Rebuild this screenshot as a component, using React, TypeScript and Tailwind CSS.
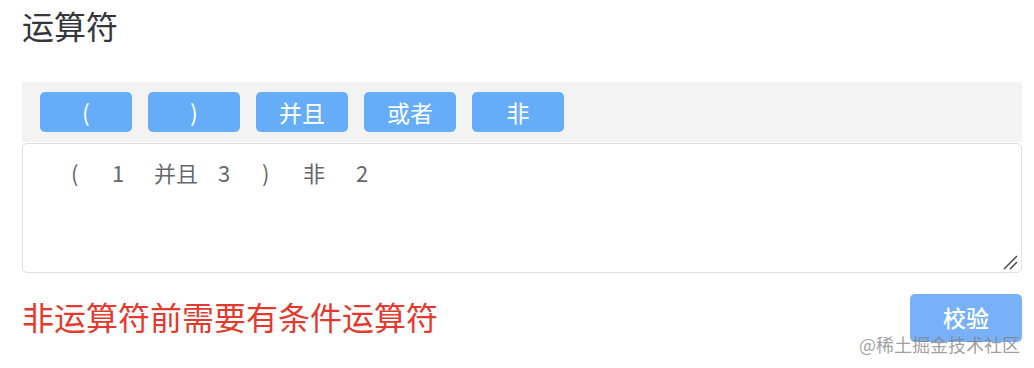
import React from "react";

const ops = ["(", ")", "并且", "或者", "非"];

// each token gets the width up to the next one, so they line up with the picture
const tokens: { text: string; w: string }[] = [
  { text: "(", w: "w-[41px]" },
  { text: "1", w: "w-[42px]" },
  { text: "并且", w: "w-[64px]" },
  { text: "3", w: "w-[44px]" },
  { text: ")", w: "w-[41px]" },
  { text: "非", w: "w-[53px]" },
  { text: "2", w: "w-[20px]" },
];

export default function App() {
  return (
    <main
      className="relative h-[368px] w-[1034px] overflow-hidden bg-white pt-[2px]"
      style={{ fontFamily: '"Noto Sans CJK SC", "Noto Sans", sans-serif' }}
    >
      <div className="ml-[22px] w-[1000px]">
        <h1 className="text-[32px] leading-[46px] font-normal text-[#34363b]">
          运算符
        </h1>

        <div className="mt-[34px] flex h-[60px] items-center gap-4 bg-[#f3f3f3] px-[18px]">
          {ops.map((op) => (
            <button
              key={op}
              className="flex h-10 w-[92px] items-center justify-center rounded-[5px] bg-[#66adf9] text-[23px] leading-none text-white"
            >
              {op}
            </button>
          ))}
        </div>

        <div className="relative mt-px h-[130px] rounded-[5px] border border-[#dcdfe6] bg-white">
          <div className="flex pt-[13px] pl-[48px] text-[22px] leading-[30px] text-[#66686d]">
            {tokens.map((t, i) => (
              <span key={i} className={t.w}>
                {t.text}
              </span>
            ))}
          </div>
          <svg
            className="absolute right-[3px] bottom-[2px]"
            width="16"
            height="16"
            viewBox="0 0 16 16"
          >
            <path d="M2 15 L15 2" stroke="#444" strokeWidth="1.5" />
            <path d="M8 15 L15 8" stroke="#444" strokeWidth="1.5" />
          </svg>
        </div>

        <div className="mt-[21px] flex items-start justify-between">
          <p className="-mt-px text-[32px] leading-[46px] text-[#e23a2f]">
            非运算符前需要有条件运算符
          </p>
          <button className="flex h-[48px] w-[112px] items-center justify-center rounded-[5px] bg-[#79b1f8] pb-px text-[23px] font-medium text-white">
            校验
          </button>
        </div>
      </div>

      <span className="absolute right-[14px] bottom-[15px] text-[18px] leading-none text-[#808080]/75">
        @稀土掘金技术社区
      </span>
    </main>
  );
}
